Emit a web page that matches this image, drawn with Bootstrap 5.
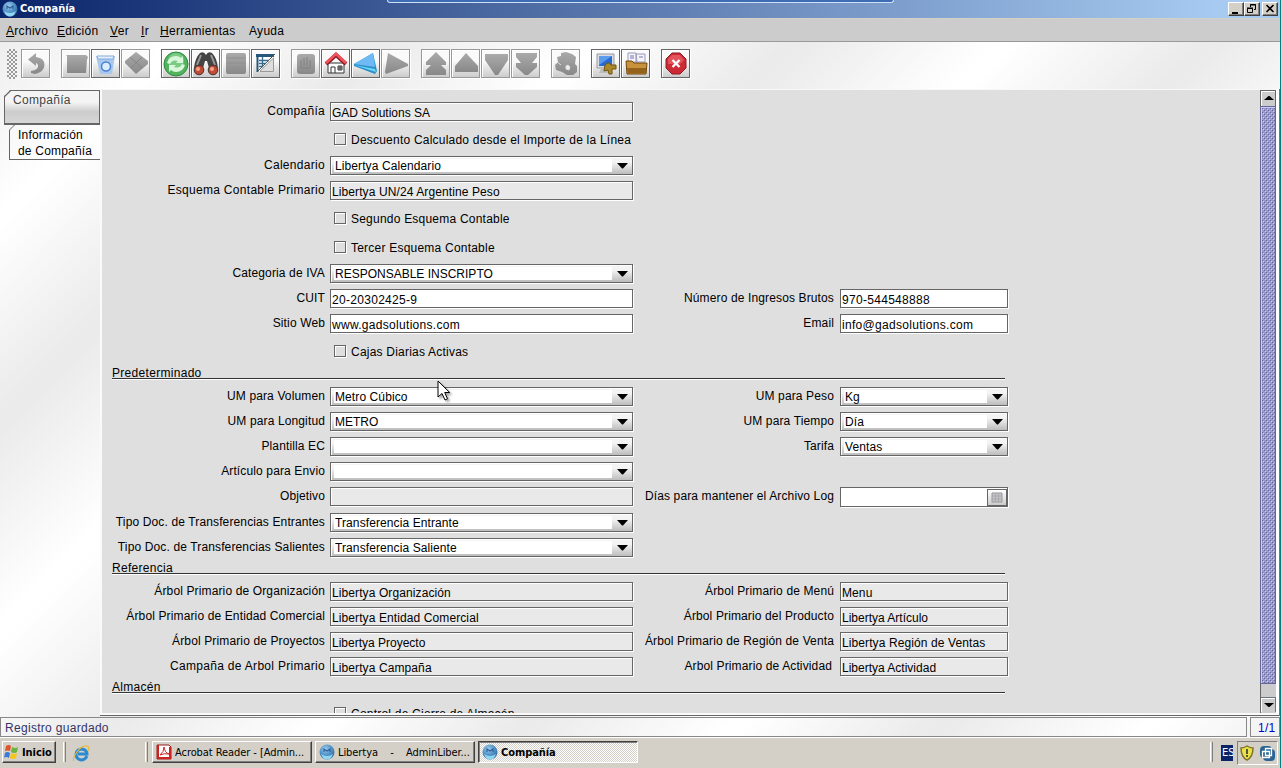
<!DOCTYPE html>
<html lang="es">
<head>
    <meta charset="UTF-8">
    <meta name="viewport" content="width=device-width, initial-scale=1.0">
    <title>Compañía</title>
    <link rel="stylesheet" href="https://cdn.jsdelivr.net/npm/bootstrap@5.3.0/dist/css/bootstrap.min.css">
    <style>
        body {
            width: 1281px;
            height: 768px;
            overflow: hidden;
            font-family: "Liberation Sans", Arial, sans-serif;
            font-size: 12px;
            line-height: 16px;
            letter-spacing: 0.3px;
            color: #000;
            background: #008080;
        }

        svg {
            display: block;
        }

        .app-window {
            width: 1280px;
            height: 768px;
            white-space: nowrap;
            background: repeating-linear-gradient(135deg, #ebebeb 0, #ebebeb 12px, #fff 150px, #fff 160px, #ebebeb 293px);
        }

        /* Title bar */
        .title-bar {
            height: 18px;
            padding: 0 2px 0 2px;
            background: linear-gradient(90deg, #0a246a, #a6caf0 95%);
        }

        .title-text {
            font: bold 11px/18px "DejaVu Sans Condensed", "DejaVu Sans", sans-serif;
            letter-spacing: 0;
            color: #fff;
            margin-left: 2px;
        }

        .dock-handle {
            position: absolute;
            left: 387px;
            top: 0;
            width: 507px;
            height: 3px;
            background: #3d6db5;
            border: 1px solid #cfe0f5;
            border-top: 0;
            border-radius: 0 0 3px 3px;
        }

        .win-btn {
            width: 16px;
            height: 14px;
            background: #d4d0c8;
            border: 1px solid;
            border-color: #fff #404040 #404040 #fff;
            box-shadow: inset -1px -1px 0 #808080;
        }

        /* Menu bar */
        .menu-bar {
            height: 24px;
            padding-left: 6px;
            background: #ccc;
            border-top: 1px solid #d4d0c8;
            border-bottom: 1px solid #999;
            line-height: 25px;
        }

        .menu-bar span:first-letter {
            text-decoration: underline;
            text-underline-offset: 1px;
        }

        .menu-bar .plain:first-letter {
            text-decoration: none;
        }

        /* Toolbar */
        .tool-bar {
            height: 47px;
            padding: 7px 0 0 7px;
        }

        .grip {
            width: 10px;
            height: 30px;
            margin-right: 4px;
            background: conic-gradient(#999 25%, #f4f4f4 0 50%, #999 0 75%, #f4f4f4 0) 0 0 / 4px 4px;
        }

        .tool-btn {
            width: 29px;
            height: 29px;
            margin-right: 1px;
            border: 1px solid #666;
            box-shadow: 1px 1px 0 #fff, inset 1px 1px 0 #fff;
            background: linear-gradient(#fafafa 40%, #ccc);
        }

        .tool-btn.off {
            border-color: #999;
        }

        .tool-gap {
            margin-right: 11px;
        }

        /* Work area */
        .work-area {
            height: 628px;
            background: linear-gradient(#fff, #fff) 1276px 0 / 3px 100% no-repeat;
            border-right: 1px solid #777;
        }

        /* Side tabs */
        .side-tabs {
            width: 100px;
            padding-top: 1px;
        }

        .side-tab {
            margin-left: 4px;
            height: 35px;
            padding: 1px 0 0 8px;
            color: #444;
            border: 1px solid #666;
            border-bottom-width: 2px;
            background: linear-gradient(#f4f4f4 35%, #ccc 65%, #d6d6d6);
            clip-path: polygon(6px 0, 100% 0, 100% 100%, 0 100%, 0 6px);
        }

        .side-tab.sub {
            margin-left: 9px;
            padding: 3px 0 0 8px;
            height: 36px;
            margin-top: -1px;
            color: #000;
            background: none;
            border-width: 0 0 1px 1px;
            letter-spacing: 0.2px;
        }

        .tab-cut {
            position: absolute;
            left: 0;
            top: 0;
        }

        /* Form pane */
        .form-pane {
            width: 1160px;
            height: 624px;
            padding-top: 12px;
            overflow: hidden;
            background: #dfdfdf;
            border-left: 2px solid #fafafa;
            border-top: 1px solid #f8f8f8;
        }

        .f-row {
            height: 25px;
        }

        .f-row.tall {
            height: 26px;
        }

        .f-label {
            width: 223px;
            line-height: 18px;
            text-align: right;
            letter-spacing: 0.13px;
        }

        .f-label.wide {
            letter-spacing: 0.3px;
        }

        .f-label.second {
            width: 201px;
        }

        .f-field {
            width: 303px;
            height: 19px;
            margin-left: 5px;
            padding: 1px 0 0 1px;
            background: #e9e9e9;
            border: 1px solid #666;
            box-shadow: 1px 1px 0 #fff, inset 1px 1px 0 #fff;
            line-height: 19px;
            letter-spacing: 0.1px;
        }

        .f-field.half {
            width: 168px;
            margin-left: 6px;
        }

        .f-field.edit {
            background: #fff;
            letter-spacing: 0.3px;
        }

        .f-field.combo {
            padding: 2px 0 3px 3px;
            background: linear-gradient(#f4f4f4 30%, #bcbcbc);
            line-height: 15px;
        }

        .f-field.tight {
            letter-spacing: 0;
        }

        .combo-text {
            background: #fff;
            margin-right: 20px;
            height: 13px;
            padding-left: 1px;
        }

        .f-field.combo svg {
            position: absolute;
            right: 4px;
            top: 6px;
        }

        .f-check {
            height: 29px;
            padding: 6px 0 0 232px;
        }

        .box {
            width: 12px;
            height: 12px;
            margin-right: 5px;
            border: 1px solid #666;
            box-shadow: 1px 1px 0 #fff, inset 1px 1px 0 #fff;
        }

        .f-check span {
            line-height: 15px;
            letter-spacing: 0.22px;
        }

        .f-section {
            width: 893px;
            height: 11px;
            margin: 0 0 8px 10px;
            line-height: 11px;
            border-bottom: 1px solid #333;
            box-shadow: 0 1px 0 #fff;
        }

        .cal-btn {
            width: 20px;
            height: 17px;
            border: 1px solid #666;
            background: linear-gradient(#fff, #ccc);
        }

        .pane-foot {
            width: 1179px;
            height: 3px;
            border-bottom: 1px solid #666;
            background: #fafafa;
        }

        /* Scroll bar */
        .scroll-bar {
            width: 16px;
            height: 623px;
            margin-top: 1px;
            border-left: 1px solid #666;
            border-top: 1px solid #666;
            background: #ccc;
        }

        .scroll-btn {
            height: 15px;
            border-right: 1px solid #666;
            box-shadow: inset 1px 1px 0 #fff;
        }

        .scroll-thumb {
            height: 578px;
            margin-left: -1px;
            border: 1px solid #666699;
            box-shadow: inset 1px 1px 0 #ccf;
            background: conic-gradient(from 270deg at 1px 1px, #ccf 25%, transparent 0) 2px 2px / 4px 4px,
                conic-gradient(from 270deg at 1px 1px, #ccf 25%, transparent 0) 0 0 / 4px 4px,
                conic-gradient(from 270deg at 1px 1px, #669 25%, transparent 0) 3px 3px / 4px 4px,
                conic-gradient(from 270deg at 1px 1px, #669 25%, transparent 0) 1px 1px / 4px 4px, #99c;
        }

        /* Status bar */
        .status-bar {
            height: 21px;
            color: #333366;
        }

        .status-cell {
            height: 20px;
            margin-top: 1px;
            border: 1px solid #888;
            line-height: 21px;
            padding-left: 4px;
        }

        .status-cell.count {
            width: 30px;
            margin-left: 3px;
            color: #0000cc;
            padding-left: 7px;
        }

        /* Task bar */
        .task-bar {
            height: 31px;
            padding: 3px 2px 0 2px;
            background: #d4d0c8;
            border-top: 1px solid #fff;
            font: 11px/14px "DejaVu Sans Condensed", "DejaVu Sans", sans-serif;
            letter-spacing: -0.07px;
        }

        .task-btn {
            width: 160px;
            height: 22px;
            padding-left: 3px;
            background: #d4d0c8;
            border: 1px solid;
            border-color: #fff #404040 #404040 #fff;
            box-shadow: inset -1px -1px 0 #808080;
        }

        .task-btn span {
            margin-left: 3px;
            padding-top: 2px;
        }

        .task-btn.down {
            border-color: #404040 #fff #fff #404040;
            box-shadow: inset 1px 1px 0 #808080;
            background: repeating-conic-gradient(#d4d0c8 0 25%, #fff 0 50%) 0 0 / 2px 2px;
        }

        .task-sep {
            width: 3px;
            height: 20px;
            margin-top: 1px;
            border-left: 1px solid #fff;
            border-right: 1px solid #808080;
        }

        .tray {
            width: 41px;
            height: 24px;
            border: 1px solid;
            border-color: #808080 #fff #fff #808080;
        }

        .lang {
            width: 12px;
            height: 16px;
            overflow: hidden;
            color: #fff;
            background: #0a246a;
            padding-left: 1px;
            line-height: 16px;
        }

        .pointer {
            position: absolute;
            left: 437px;
            top: 380px;
            filter: drop-shadow(2px 2px 1px rgba(0, 0, 0, 0.35));
        }
    </style>
</head>
<body>
    <svg width="0" height="0" class="position-absolute">
        <defs>
            <radialGradient id="globe" cx=".4" cy=".3" r=".7"><stop offset="0" stop-color="#9cc9ea"/><stop offset=".6" stop-color="#4f90c6"/><stop offset="1" stop-color="#35699c"/></radialGradient>
            <linearGradient id="gray" x1="0" y1="0" x2="0" y2="1"><stop offset="0" stop-color="#aaa"/><stop offset="1" stop-color="#888"/></linearGradient>
            <symbol id="logo" viewBox="0 0 16 16">
                <circle cx="8" cy="8" r="7.5" fill="url(#globe)"/>
                <path d="M2 10q6 4 12 0l-2 4q-4 3-8 0z" fill="#8fd6f2"/>
                <path d="M5 8V5l3 2 3-2v3" fill="none" stroke="#2a6099" stroke-width="1.100"/>
            </symbol>
            <symbol id="arrow" viewBox="0 0 11 6"><path d="M0 0h11L6 5.500H5z"/></symbol>
        </defs>
    </svg>

    <div class="app-window d-flex flex-column">
        <div class="title-bar d-flex align-items-center">
            <svg width="16" height="16"><use href="#logo"/></svg>
            <span class="title-text">Compañía</span>
            <div class="dock-handle"></div>
            <div class="d-flex ms-auto">
                <div class="win-btn"><svg width="14" height="12"><path d="M3 9h6v2H3z"/></svg></div>
                <div class="win-btn"><svg width="14" height="12" fill="none" stroke="#000"><path d="M5.500 4V1.500h5v5H9M5 2h6M2.500 5.500h5v4h-5zM2 5h6"/></svg></div>
                <div class="win-btn" style="margin-left: 2px"><svg width="14" height="12" stroke="#000" stroke-width="1.600"><path d="M3.500 2l7 7M10.500 2l-7 7"/></svg></div>
            </div>
        </div>

        <div class="menu-bar d-flex">
            <span class="d-block" style="width: 51px">Archivo</span>
            <span class="d-block" style="width: 53px">Edición</span>
            <span class="d-block" style="width: 31px">Ver</span>
            <span class="d-block" style="width: 19px">Ir</span>
            <span class="d-block" style="width: 89px">Herramientas</span>
            <span class="d-block plain">Ayuda</span>
        </div>

        <div class="tool-bar d-flex">
            <div class="grip"></div>
            <div class="tool-btn off tool-gap"><svg width="27" height="27"><path d="M6 9.500L14 3v4q9 1 8.500 8.500Q22 22 13 24l-4-1v-2q8-1 7-6-1-2-2-2v3z" fill="url(#gray)"/></svg></div>
            <div class="tool-btn off"><svg width="27" height="27"><path d="M4 5h20l2 2-1 3-1 13H5V6z" fill="url(#gray)"/></svg></div>
            <div class="tool-btn"><svg width="27" height="27"><path d="M4 6h19l-3 18H8z" fill="#a9c8ee"/><path d="M5 6h17l-1 3H6z" fill="#e4f0ff" stroke="#86a9dc"/><circle cx="14" cy="16.500" r="4.500" fill="#dcecff" stroke="#4a7fd0" stroke-width="1.500"/></svg></div>
            <div class="tool-btn off tool-gap"><svg width="27" height="27"><path d="M14 2l12 9v3L14 24 3 13v-2z" fill="url(#gray)"/><path d="M8 7l12 11M20 7L9 18" stroke="#858585"/></svg></div>
            <div class="tool-btn"><svg width="27" height="27"><circle cx="14" cy="14" r="12" fill="#51b35d" stroke="#338a42"/><circle cx="14" cy="11" r="8" fill="#8fd695" opacity=".7"/><path d="M5 13q2-7 9-7 3 0 5 2l2-2v7h-7l2-2q-6-2-8 3zM23 15q-2 7-9 7-3 0-5-2l-2 2v-7h7l-2 2q6 2 8-3z" fill="#d9f7da"/></svg></div>
            <div class="tool-btn"><svg width="27" height="27"><path d="M8 3q4-2 6 2 2-4 6-2 5 5 6 15H17l-2-7h-2l-2 7H2Q3 8 8 3z" fill="#444"/><path d="M9 5L5 15M19 5l4 10" stroke="#999" stroke-width="2"/><circle cx="7" cy="20" r="4.800" fill="#c14a34" stroke="#433"/><circle cx="21" cy="20" r="4.800" fill="#c14a34" stroke="#433"/><circle cx="6" cy="19" r="2" fill="#f6a58c"/><circle cx="20" cy="19" r="2" fill="#f6a58c"/></svg></div>
            <div class="tool-btn off"><svg width="27" height="27"><rect x="4" y="3" width="20" height="21" rx="2" fill="url(#gray)"/><path d="M5 8h18M5 13h18M5 18h18" stroke="#909090"/></svg></div>
            <div class="tool-btn tool-gap"><svg width="27" height="27"><path d="M5 5h17v17H5z" fill="#fff"/><path d="M8 21.500h13.500V8L8 21z" fill="#ddd" stroke="#999"/><path d="M4 4h18v3H4z" fill="#245779"/><path d="M5.500 4v18" stroke="#245779" stroke-width="2"/><path d="M7 10.500h10M7 13.500h7M7 16.500h4M10.500 7v10" stroke="#346b8f" stroke-width="1.300"/><path d="M23 4L6 21" stroke="#555"/></svg></div>
            <div class="tool-btn off"><svg width="27" height="27"><rect x="5" y="4" width="18" height="20" rx="3" fill="url(#gray)"/><path d="M9 10v8h9v-8M12 8v8M15 7v9" stroke="#808080" fill="none"/></svg></div>
            <div class="tool-btn"><svg width="27" height="27"><path d="M6 13h16v10H6z" fill="#fff" stroke="#333"/><path d="M4 14L14 5l10 9" stroke="#8d1a22" stroke-width="4" fill="none"/><path d="M4 13L14 4l10 9" stroke="#f0525c" stroke-width="2.800" fill="none"/><path d="M9 23v-6h4v6M16 16h4v4h-4zM18 16v4M16 18h4" stroke="#333" fill="none"/></svg></div>
            <div class="tool-btn"><svg width="27" height="27"><path d="M2 14L21 3l4 18-2 3L2 16z" fill="#2c8fc9"/><path d="M2 14L21 3l2 14z" fill="#6fb9f5"/><path d="M2 15l21 4 1 3z" fill="#6ad8fa"/></svg></div>
            <div class="tool-btn off tool-gap"><svg width="27" height="27"><path d="M6 3l20 11v2L4 24l-1-2z" fill="url(#gray)"/></svg></div>
            <div class="tool-btn off"><svg width="27" height="27"><path d="M14 2l10 10v3h-5l5 5v5H4v-5l5-5H4v-3z" fill="url(#gray)"/></svg></div>
            <div class="tool-btn off"><svg width="27" height="27"><path d="M14 3l12 13v6H3v-6z" fill="url(#gray)"/></svg></div>
            <div class="tool-btn off"><svg width="27" height="27"><path d="M3 4h23v6L16 25h-3L3 10z" fill="url(#gray)"/></svg></div>
            <div class="tool-btn off tool-gap"><svg width="27" height="27"><path d="M4 3h21v4l-5 6h5v4l-9 8h-3l-9-8v-4h5L4 7z" fill="url(#gray)"/></svg></div>
            <div class="tool-btn off tool-gap"><svg width="27" height="27"><path d="M9 3l5-1 6 2 4 3-1 7 2 2v6l-4 3h-6l-5-3-6-2-1-5 3-3-1-5 4-1z" fill="url(#gray)"/><path d="M14 16l2-1 2 2-1 3-3-1zM5 12l4 3" fill="#eee" stroke="#ddd"/></svg></div>
            <div class="tool-btn"><svg width="27" height="27"><path d="M5 4h17v14H5z" fill="#d8dde6" stroke="#999"/><path d="M7 6h13v10H7z" fill="#266bd0"/><path d="M7 6h13L7 15z" fill="#5d9bee"/><path d="M9 19h9v4H7z" fill="#bbb"/><path d="M13 15q4-4 6 0h5v4h-4v5h-3l-1-4-4 1z" fill="#a9882c" stroke="#735509"/></svg></div>
            <div class="tool-btn tool-gap"><svg width="27" height="27"><path d="M6 3h8l1 9H6zM14 4h9v8h-9z" fill="#f4f4fa" stroke="#9999bb"/><path d="M8 6h4M8 8h4M17 7h4" stroke="#77a"/><path d="M4 11h6l2 2h13l-1 11H5z" fill="#c8923a" stroke="#704508"/><path d="M5 18h19v5H6z" fill="#94621a"/></svg></div>
            <div class="tool-btn"><svg width="27" height="27"><path d="M10 3h8l6 6v9l-6 6h-8l-6-6V9z" fill="#cc2a34" stroke="#8e1b22"/><path d="M10 5h8l4 5-4 4H6v-5z" fill="#f07078" opacity=".6"/><path d="M10.500 10l7 7M17.500 10l-7 7" stroke="#fff" stroke-width="2.300"/></svg></div>
        </div>

        <div class="work-area d-flex">
            <div class="side-tabs flex-shrink-0">
                <div class="side-tab position-relative">
                    Compañía
                    <svg class="tab-cut" width="8" height="8"><path d="M-1 6L6-1" stroke="#666" stroke-width="1.500"/></svg>
                </div>
                <div class="side-tab sub position-relative">
                    Información<br>de Compañía
                    <svg class="tab-cut" width="8" height="8"><path d="M-1 6L6-1" stroke="#666" stroke-width="1.500"/></svg>
                </div>
            </div>
            <div class="flex-shrink-0">
                <div class="d-flex">
                    <div class="form-pane flex-shrink-0">
                        <div class="f-row d-flex">
                            <div class="f-label wide">Compañía</div><div class="f-field tight">GAD Solutions SA</div>
                        </div>
                        <div class="f-check d-flex"><div class="box"></div><span>Descuento Calculado desde el Importe de la Línea</span></div>
                        <div class="f-row d-flex">
                            <div class="f-label wide">Calendario</div>
                            <div class="f-field combo position-relative"><div class="combo-text">Libertya Calendario</div><svg width="11" height="6"><use href="#arrow"/></svg></div>
                        </div>
                        <div class="f-row d-flex">
                            <div class="f-label wide">Esquema Contable Primario</div><div class="f-field">Libertya UN/24 Argentine Peso</div>
                        </div>
                        <div class="f-check d-flex"><div class="box"></div><span>Segundo Esquema Contable</span></div>
                        <div class="f-check d-flex"><div class="box"></div><span>Tercer Esquema Contable</span></div>
                        <div class="f-row d-flex">
                            <div class="f-label">Categoria de IVA</div>
                            <div class="f-field combo tight position-relative"><div class="combo-text">RESPONSABLE INSCRIPTO</div><svg width="11" height="6"><use href="#arrow"/></svg></div>
                        </div>
                        <div class="f-row d-flex">
                            <div class="f-label">CUIT</div><div class="f-field edit">20-20302425-9</div>
                            <div class="f-label second">Número de Ingresos Brutos</div><div class="f-field edit half">970-544548888</div>
                        </div>
                        <div class="f-row d-flex">
                            <div class="f-label">Sitio Web</div><div class="f-field edit">www.gadsolutions.com</div>
                            <div class="f-label second">Email</div><div class="f-field edit half">info@gadsolutions.com</div>
                        </div>
                        <div class="f-check d-flex"><div class="box"></div><span>Cajas Diarias Activas</span></div>

                        <div class="f-section">Predeterminado</div>
                        <div class="f-row d-flex">
                            <div class="f-label">UM para Volumen</div>
                            <div class="f-field combo position-relative"><div class="combo-text">Metro Cúbico</div><svg width="11" height="6"><use href="#arrow"/></svg></div>
                            <div class="f-label second">UM para Peso</div>
                            <div class="f-field combo half position-relative"><div class="combo-text">Kg</div><svg width="11" height="6"><use href="#arrow"/></svg></div>
                        </div>
                        <div class="f-row d-flex">
                            <div class="f-label">UM para Longitud</div>
                            <div class="f-field combo tight position-relative"><div class="combo-text">METRO</div><svg width="11" height="6"><use href="#arrow"/></svg></div>
                            <div class="f-label second">UM para Tiempo</div>
                            <div class="f-field combo half position-relative"><div class="combo-text">Día</div><svg width="11" height="6"><use href="#arrow"/></svg></div>
                        </div>
                        <div class="f-row d-flex">
                            <div class="f-label">Plantilla EC</div>
                            <div class="f-field combo position-relative"><div class="combo-text"></div><svg width="11" height="6"><use href="#arrow"/></svg></div>
                            <div class="f-label second">Tarifa</div>
                            <div class="f-field combo half position-relative"><div class="combo-text">Ventas</div><svg width="11" height="6"><use href="#arrow"/></svg></div>
                        </div>
                        <div class="f-row d-flex">
                            <div class="f-label">Artículo para Envio</div>
                            <div class="f-field combo position-relative"><div class="combo-text"></div><svg width="11" height="6"><use href="#arrow"/></svg></div>
                        </div>
                        <div class="f-row tall d-flex">
                            <div class="f-label">Objetivo</div><div class="f-field"></div>
                            <div class="f-label second">Días para mantener el Archivo Log</div>
                            <div class="f-field edit half d-flex justify-content-end" style="height: 20px">
                                <div class="cal-btn"><svg width="18" height="15"><path d="M4 3h10v9H4z" fill="#c4c4cc" stroke="#999"/><path d="M4 6h10M4 9h10M7.500 3v9M10.500 3v9" stroke="#aaa"/></svg></div>
                            </div>
                        </div>
                        <div class="f-row d-flex">
                            <div class="f-label">Tipo Doc. de Transferencias Entrantes</div>
                            <div class="f-field combo position-relative"><div class="combo-text">Transferencia Entrante</div><svg width="11" height="6"><use href="#arrow"/></svg></div>
                        </div>
                        <div class="f-row d-flex">
                            <div class="f-label">Tipo Doc. de Transferencias Salientes</div>
                            <div class="f-field combo position-relative"><div class="combo-text">Transferencia Saliente</div><svg width="11" height="6"><use href="#arrow"/></svg></div>
                        </div>

                        <div class="f-section">Referencia</div>
                        <div class="f-row d-flex">
                            <div class="f-label">Árbol Primario de Organización</div><div class="f-field">Libertya Organización</div>
                            <div class="f-label second">Árbol Primario de Menú</div><div class="f-field half">Menu</div>
                        </div>
                        <div class="f-row d-flex">
                            <div class="f-label">Árbol Primario de Entidad Comercial</div><div class="f-field">Libertya Entidad Comercial</div>
                            <div class="f-label second">Árbol Primario del Producto</div><div class="f-field tight half">Libertya Artículo</div>
                        </div>
                        <div class="f-row d-flex">
                            <div class="f-label">Árbol Primario de Proyectos</div><div class="f-field tight">Libertya Proyecto</div>
                            <div class="f-label second">Árbol Primario de Región de Venta</div><div class="f-field half">Libertya Región de Ventas</div>
                        </div>
                        <div class="f-row d-flex">
                            <div class="f-label wide">Campaña de Arbol Primario</div><div class="f-field">Libertya Campaña</div>
                            <div class="f-label second" style="padding-right: 2px">Arbol Primario de Actividad</div><div class="f-field tight half">Libertya Actividad</div>
                        </div>

                        <div class="f-section">Almacén</div>
                        <div class="f-check d-flex"><div class="box"></div><span>Control de Cierre de Almacén</span></div>
                    </div>
                    <div class="scroll-bar">
                        <div class="scroll-btn"><svg width="15" height="14"><path d="M3 9h10L8.500 5h-1z"/></svg></div>
                        <div class="scroll-thumb"></div>
                        <div style="height: 13px"></div>
                        <div class="scroll-btn border-top border-secondary"><svg width="15" height="14"><path d="M3 5h10L8.500 9h-1z"/></svg></div>
                    </div>
                </div>
                <div class="pane-foot"></div>
            </div>
        </div>

        <div class="status-bar d-flex">
            <div class="status-cell" style="width: 1247px">Registro guardado</div>
            <div class="status-cell count">1/1</div>
        </div>

        <div class="task-bar d-flex">
            <div class="task-btn fw-bold d-flex align-items-center ps-0" style="width: 54px">
                <svg width="16" height="18"><path d="M3 3q3-2 5 0L7 8Q5 7 2 8z" fill="#e2532b"/><path d="M9 4q3 2 6 0l-1 5q-3 2-6 0z" fill="#6cb33f"/><path d="M2 10q2-2 5 0l-1 5q-3-2-5 0z" fill="#3c78d8"/><path d="M8 10q3 2 6 0l-1 5q-3 2-6 0z" fill="#f5c518"/></svg>
                <span>Inicio</span>
            </div>
            <div class="task-sep" style="margin-left: 7px"></div>
            <svg class="mt-1 ms-1" width="20" height="18"><path d="M17 11q-2 4-6 4-5-1-5-6 1-5 6-5 5 1 5 5H8" fill="none" stroke="#2b8ad0" stroke-width="3"/><path d="M4 16Q2 14 7 7t10-6q3 1 1 5" fill="none" stroke="#e8b83a" stroke-width="1.200"/></svg>
            <div class="task-sep" style="margin-left: 55px"></div>
            <div class="d-flex" style="margin-left: 4px; gap: 3px">
                <div class="task-btn d-flex align-items-center">
                    <svg width="16" height="16"><path d="M1 1h12l2 2v12H1z" fill="#fff" stroke="#9c1c1c"/><path d="M1 1h2v14H1zM13 3h2v12H3v-2h10z" fill="#c22"/><path d="M4 11Q8 8 8 3q1 6 5 7-5-1-9 1" fill="none" stroke="#c22"/></svg>
                    <span>Acrobat Reader - [Admin...</span>
                </div>
                <div class="task-btn d-flex align-items-center">
                    <svg width="16" height="16"><use href="#logo"/></svg>
                    <span style="white-space: pre">Libertya    -    AdminLiber...</span>
                </div>
                <div class="task-btn down d-flex align-items-center fw-bold">
                    <svg width="16" height="16"><use href="#logo"/></svg>
                    <span>Compañía</span>
                </div>
            </div>
            <div class="d-flex ms-auto">
                <div class="task-sep" style="margin-right: 8px"></div>
                <div class="lang mt-1" style="margin-right: 4px">ES</div>
                <div class="tray d-flex align-items-center">
                    <svg width="18" height="18"><path d="M9 2q3 2 6 2 0 9-6 12Q3 13 3 4q3 0 6-2z" fill="#ece04a" stroke="#7d7427" stroke-width="1.500"/><path d="M9 5v5M9 11v2" stroke="#333" stroke-width="1.600"/></svg>
                    <svg style="margin-left: 3px" width="17" height="17"><rect x="1" y="1" width="12" height="12" rx="4" fill="#2a6494"/><rect x="4" y="4" width="12" height="12" rx="4" fill="#2a6494"/><path d="M3.500 6.500h7v6h-7zM6.500 3.500h6v7h-6z" fill="none" stroke="#fff" stroke-width="1.300"/></svg>
                </div>
            </div>
        </div>
    </div>

    <svg class="pointer" width="16" height="22"><path d="M1 1v16l4-3.500 3 6.500 2.500-1.200L7.700 12.500h5z" fill="#fff" stroke="#000"/></svg>

    <script src="https://cdn.jsdelivr.net/npm/bootstrap@5.3.0/dist/js/bootstrap.bundle.min.js"></script>
</body>
</html>
